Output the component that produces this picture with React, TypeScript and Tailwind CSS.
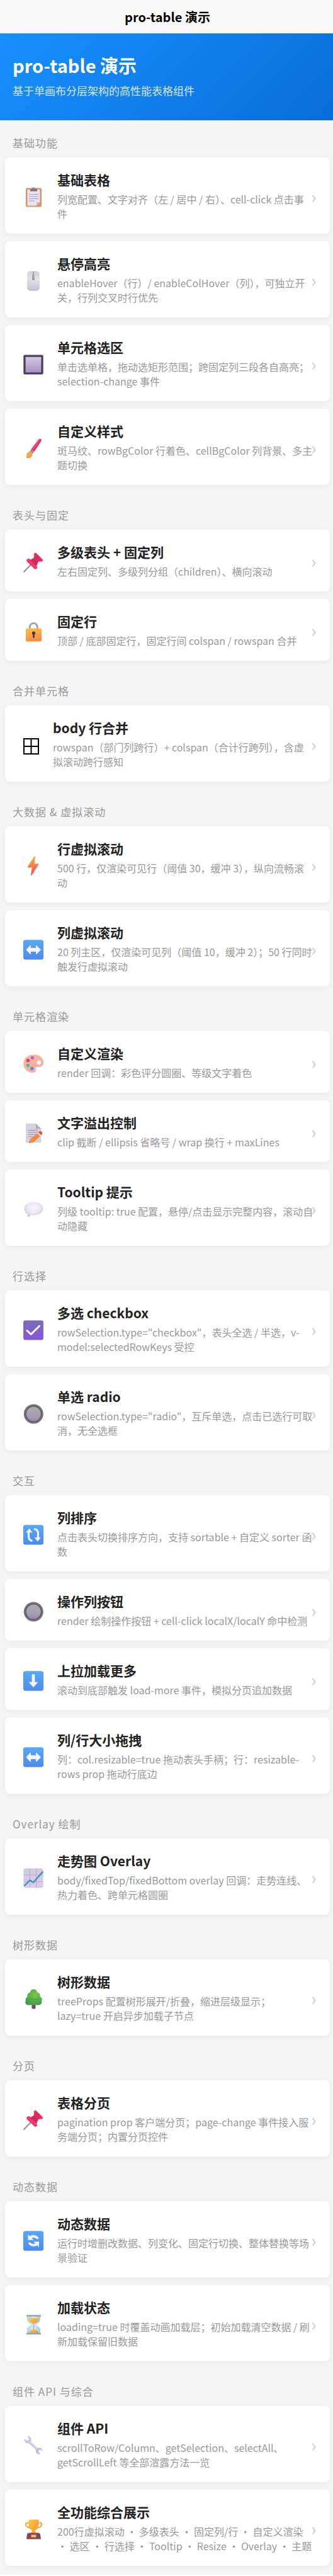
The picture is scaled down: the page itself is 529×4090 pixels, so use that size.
import React from 'react';

type IconName =
  | 'clipboard' | 'mouse' | 'square' | 'brush' | 'pin' | 'lock' | 'grid' | 'bolt'
  | 'leftRight' | 'palette' | 'memo' | 'speech' | 'check' | 'radio' | 'sort'
  | 'down' | 'chart' | 'tree' | 'refresh' | 'hourglass' | 'wrench' | 'trophy';

interface DemoItem {
  icon: IconName;
  title: string;
  desc: string;
}

interface DemoGroup {
  label: string;
  items: DemoItem[];
}

const groups: DemoGroup[] = [
  {
    label: '基础功能',
    items: [
      { icon: 'clipboard', title: '基础表格', desc: '列宽配置、文字对齐（左 / 居中 / 右）、cell-click 点击事件' },
      { icon: 'mouse', title: '悬停高亮', desc: 'enableHover（行）/ enableColHover（列），可独立开关，行列交叉时行优先' },
      { icon: 'square', title: '单元格选区', desc: '单击选单格，拖动选矩形范围；跨固定列三段各自高亮；selection-change 事件' },
      { icon: 'brush', title: '自定义样式', desc: '斑马纹、rowBgColor 行着色、cellBgColor 列背景、多主题切换' },
    ],
  },
  {
    label: '表头与固定',
    items: [
      { icon: 'pin', title: '多级表头 + 固定列', desc: '左右固定列、多级列分组（children）、横向滚动' },
      { icon: 'lock', title: '固定行', desc: '顶部 / 底部固定行，固定行间 colspan / rowspan 合并' },
    ],
  },
  {
    label: '合并单元格',
    items: [
      { icon: 'grid', title: 'body 行合并', desc: 'rowspan（部门列跨行）+ colspan（合计行跨列），含虚拟滚动跨行感知' },
    ],
  },
  {
    label: '大数据 & 虚拟滚动',
    items: [
      { icon: 'bolt', title: '行虚拟滚动', desc: '500 行，仅渲染可见行（阈值 30，缓冲 3），纵向流畅滚动' },
      { icon: 'leftRight', title: '列虚拟滚动', desc: '20 列主区，仅渲染可见列（阈值 10，缓冲 2）；50 行同时触发行虚拟滚动' },
    ],
  },
  {
    label: '单元格渲染',
    items: [
      { icon: 'palette', title: '自定义渲染', desc: 'render 回调：彩色评分圆圈、等级文字着色' },
      { icon: 'memo', title: '文字溢出控制', desc: 'clip 截断 / ellipsis 省略号 / wrap 换行 + maxLines' },
      { icon: 'speech', title: 'Tooltip 提示', desc: '列级 tooltip: true 配置，悬停/点击显示完整内容，滚动自动隐藏' },
    ],
  },
  {
    label: '行选择',
    items: [
      { icon: 'check', title: '多选 checkbox', desc: 'rowSelection.type="checkbox"，表头全选 / 半选，v-model:selectedRowKeys 受控' },
      { icon: 'radio', title: '单选 radio', desc: 'rowSelection.type="radio"，互斥单选，点击已选行可取消，无全选框' },
    ],
  },
  {
    label: '交互',
    items: [
      { icon: 'sort', title: '列排序', desc: '点击表头切换排序方向，支持 sortable + 自定义 sorter 函数' },
      { icon: 'radio', title: '操作列按钮', desc: 'render 绘制操作按钮 + cell-click localX/localY 命中检测' },
      { icon: 'down', title: '上拉加载更多', desc: '滚动到底部触发 load-more 事件，模拟分页追加数据' },
      { icon: 'leftRight', title: '列/行大小拖拽', desc: '列：col.resizable=true 拖动表头手柄；行：resizable-rows prop 拖动行底边' },
    ],
  },
  {
    label: 'Overlay 绘制',
    items: [
      { icon: 'chart', title: '走势图 Overlay', desc: 'body/fixedTop/fixedBottom overlay 回调：走势连线、热力着色、跨单元格圆圈' },
    ],
  },
  {
    label: '树形数据',
    items: [
      { icon: 'tree', title: '树形数据', desc: 'treeProps 配置树形展开/折叠，缩进层级显示；lazy=true 开启异步加载子节点' },
    ],
  },
  {
    label: '分页',
    items: [
      { icon: 'pin', title: '表格分页', desc: 'pagination prop 客户端分页；page-change 事件接入服务端分页；内置分页控件' },
    ],
  },
  {
    label: '动态数据',
    items: [
      { icon: 'refresh', title: '动态数据', desc: '运行时增删改数据、列变化、固定行切换、整体替换等场景验证' },
      { icon: 'hourglass', title: '加载状态', desc: 'loading=true 时覆盖动画加载层；初始加载清空数据 / 刷新加载保留旧数据' },
    ],
  },
  {
    label: '组件 API 与综合',
    items: [
      { icon: 'wrench', title: '组件 API', desc: 'scrollToRow/Column、getSelection、selectAll、getScrollLeft 等全部渲露方法一览' },
      { icon: 'trophy', title: '全功能综合展示', desc: '200行虚拟滚动 · 多级表头 · 固定列/行 · 自定义渲染 · 选区 · 行选择 · Tooltip · Resize · Overlay · 主题' },
    ],
  },
];

// Shared gradients, referenced by every icon below
const IconDefs = () => (
  <svg className="absolute w-0 h-0" aria-hidden="true">
    <defs>
      <linearGradient id="gBlue" x1="0" y1="0" x2="0" y2="1">
        <stop offset="0" stopColor="#55A8F8" />
        <stop offset="1" stopColor="#4C8DEE" />
      </linearGradient>
      <linearGradient id="gPurple" x1="0" y1="0" x2="0" y2="1">
        <stop offset="0" stopColor="#7D6BB4" />
        <stop offset="1" stopColor="#8A55E0" />
      </linearGradient>
      <linearGradient id="gLilac" x1="0" y1="0" x2="0" y2="1">
        <stop offset="0" stopColor="#D3C8E0" />
        <stop offset="1" stopColor="#A892C8" />
      </linearGradient>
      <linearGradient id="gMouse" x1="0" y1="0" x2="0" y2="1">
        <stop offset="0" stopColor="#D2D2D4" />
        <stop offset="0.4" stopColor="#E2E1E4" />
        <stop offset="1" stopColor="#C9C1D6" />
      </linearGradient>
      <linearGradient id="gBolt" x1="0" y1="0" x2="0" y2="1">
        <stop offset="0" stopColor="#FBB546" />
        <stop offset="1" stopColor="#F8434F" />
      </linearGradient>
      <linearGradient id="gLock" x1="0" y1="0" x2="0.3" y2="1">
        <stop offset="0" stopColor="#FBC546" />
        <stop offset="1" stopColor="#F98C45" />
      </linearGradient>
      <linearGradient id="gRadio" x1="0" y1="0" x2="0" y2="1">
        <stop offset="0" stopColor="#ABA9AE" />
        <stop offset="0.6" stopColor="#A7A1AF" />
        <stop offset="1" stopColor="#9A83B8" />
      </linearGradient>
      <linearGradient id="gPin" x1="0" y1="0" x2="1" y2="1">
        <stop offset="0" stopColor="#F0305F" />
        <stop offset="0.5" stopColor="#D32B5C" />
        <stop offset="1" stopColor="#F93A70" />
      </linearGradient>
      <linearGradient id="gChart" x1="0" y1="0" x2="0.3" y2="1">
        <stop offset="0" stopColor="#CFCBD6" />
        <stop offset="1" stopColor="#DACDEA" />
      </linearGradient>
      <radialGradient id="gSpeech" cx="0.5" cy="0.4" r="0.6">
        <stop offset="0" stopColor="#F8F6FA" />
        <stop offset="0.6" stopColor="#EBE6F2" />
        <stop offset="1" stopColor="#CEC4DE" />
      </radialGradient>
      <radialGradient id="gLeaf" cx="0.6" cy="0.35" r="0.7">
        <stop offset="0" stopColor="#7CC846" />
        <stop offset="1" stopColor="#3E9A4A" />
      </radialGradient>
      <linearGradient id="gCup" x1="0" y1="0" x2="1" y2="1">
        <stop offset="0" stopColor="#FFC93F" />
        <stop offset="0.6" stopColor="#F9A233" />
        <stop offset="1" stopColor="#FBC547" />
      </linearGradient>
      <linearGradient id="gGlass" x1="0" y1="0" x2="1" y2="0">
        <stop offset="0" stopColor="#A5D3F2" />
        <stop offset="0.5" stopColor="#D8ECFA" />
        <stop offset="1" stopColor="#9CCBEF" />
      </linearGradient>
      <linearGradient id="gSand" x1="0" y1="0" x2="1" y2="1">
        <stop offset="0" stopColor="#FCCB4A" />
        <stop offset="1" stopColor="#EC9140" />
      </linearGradient>
      <linearGradient id="gSkin" x1="0" y1="0" x2="1" y2="1">
        <stop offset="0" stopColor="#FDB99B" />
        <stop offset="1" stopColor="#F5A79C" />
      </linearGradient>
    </defs>
  </svg>
);

const BlueTile = () => (
  <>
    <rect x="0.2" y="0.5" width="31.6" height="31" rx="3" fill="#3F78CE" />
    <rect x="1" y="0.8" width="30.6" height="30" rx="2.6" fill="url(#gBlue)" />
  </>
);

const shapes: Record<IconName, React.ReactNode> = {
  clipboard: (
    <>
      <rect x="4" y="1.5" width="25" height="30" rx="2" fill="#DC935F" />
      <path d="M6.5 4h20v20l-5.5 5.5H6.5z" fill="#E9E3F1" />
      <path d="M21 29.5V25q0-1 1-1h4.5z" fill="#C7BBD6" />
      <path d="M11 6.8V4.5q0-1.5 1.5-1.5H14a2.5 2.5 0 0 1 5 0h1.5Q22 3 22 4.5v2.3z" fill="#7B7186" />
      <circle cx="16.5" cy="2.8" r="0.9" fill="#DC935F" />
      <path d="M9 11.5h15M9 15h15M9 18.5h15M9 22h9" stroke="#A79CB8" strokeWidth="1" />
    </>
  ),
  mouse: (
    <>
      <rect x="6" y="0.5" width="20" height="31" rx="5" fill="url(#gMouse)" />
      <path d="M7 27q2 4 9 4t9-4" stroke="#BDB3CC" strokeWidth="1" fill="none" />
      <path d="M16 1v7" stroke="#9C9A9E" strokeWidth="1.6" />
      <rect x="14.3" y="6" width="3.4" height="9" rx="1.7" fill="#8E8B91" />
      <rect x="15.6" y="7" width="1.6" height="5" rx="0.8" fill="#B8B6BA" />
    </>
  ),
  square: (
    <>
      <rect x="0.3" y="0.5" width="31.4" height="31" rx="2" fill="#4B3E5E" />
      <rect x="3.6" y="3.8" width="24.8" height="24.4" rx="0.5" fill="url(#gLilac)" />
    </>
  ),
  brush: (
    <>
      <path d="M24.5 1.5q1.5-1.6 3.3-.4 1.7 1.3.5 3.3L17.5 21l-5-3.7z" fill="#E92C68" />
      <path d="M26.3 1.5L15.5 17.5" stroke="#F4588B" strokeWidth="1.4" />
      <path d="M12.5 17.3l5 3.7-2.7 3.7-5-3.7z" fill="#A08F98" />
      <path d="M9.8 21.3q3.9.2 4.8 3.4.6 4.2-3.3 6-3.8 1.5-7.3.3 1.8-1.2 1.2-3.8-.3-4.9 4.6-5.9z" fill="#F9A94C" />
      <path d="M6 29.5q4 .5 6-2" stroke="#E88A42" strokeWidth="1.2" fill="none" />
    </>
  ),
  pin: (
    <>
      <path d="M12.5 19L1.2 30.8" stroke="#8F8B95" strokeWidth="2" strokeLinecap="round" />
      <path d="M17.6 8.3L24 14.6l-3 7.4-10-10z" fill="#CF2B59" />
      <path d="M17.4 1.4q1.6-1.6 3.4.2L30.4 11q1.7 1.8.1 3-1.5 1-3.3.4l-3.2.9-7.5-7.4.9-3.2q-1.2-1.9 0-3.3z" fill="url(#gPin)" />
      <path d="M5.7 11.2q2-2 4.6-.6L21 21.4q1.9 2.6.2 4.6-1.8 1.6-3.7 0L5.9 14.8q-1.6-2-.2-3.6z" fill="#EE2F66" />
      <path d="M7 11.5l13 13" stroke="#F65C87" strokeWidth="1" strokeLinecap="round" />
    </>
  ),
  lock: (
    <>
      <path d="M10.3 13V8.5a6 6 0 0 1 12 0V13" stroke="#A7A1B8" strokeWidth="3" fill="none" />
      <rect x="4" y="10.5" width="25" height="21" rx="2" fill="url(#gLock)" />
      <circle cx="16.5" cy="18.2" r="2.7" fill="#4A3550" />
      <rect x="15.2" y="18" width="2.6" height="8" rx="1.3" fill="#4A3550" />
    </>
  ),
  grid: <path d="M1 6h23v24H1zM12.5 6v24M1 18h23" stroke="#000" strokeWidth="2" fill="none" />,
  bolt: <path d="M17.5.5L7 17q-.6 1.5.8 1.5h6l-1.7 12q.2 1.3 1 .5L24.5 13.5q.4-1.3-1-1.3h-5.7L19 1.2q-.4-1.3-1.5-.7z" fill="url(#gBolt)" />,
  leftRight: (
    <>
      <BlueTile />
      <path d="M4.8 16l6.7-7v4.5h9V9l7 7-7 7v-4.5h-9V23z" fill="#F7F2FF" stroke="#F7F2FF" strokeWidth="1" strokeLinejoin="round" />
    </>
  ),
  palette: (
    <>
      <path d="M17 1.5C27 1.5 32 7.5 32 14c0 5-3.5 7.5-7.5 7-4-.4-5.5 1-4.8 4 .6 3-.7 5-4.2 5C7 30 .2 24 .2 15.5S7.5 1.5 17 1.5z" fill="url(#gSkin)" />
      <circle cx="25" cy="14" r="3.4" fill="#fff" />
      <circle cx="14.5" cy="6.5" r="2.7" fill="#B266D8" />
      <circle cx="7.5" cy="10.8" r="2.7" fill="#E33A7E" />
      <circle cx="7.5" cy="18.5" r="2.7" fill="#45B7B2" />
      <circle cx="13.8" cy="23.5" r="2.7" fill="#4C8FE6" />
    </>
  ),
  memo: (
    <>
      <path d="M4 .8h16l8.5 8.5v22H4z" fill="#D6D1DF" />
      <path d="M20 .8l8.5 8.5H20z" fill="#B3ADBD" />
      <path d="M8 11.5h15M8 15h15M8 18.5h13M8 22h9" stroke="#9D93AE" strokeWidth="1" />
      <path d="M22.3 16.5l4.5 4.5-9.6 9.2-7.2 1.3q-.9-.1-.6-1.2l1.7-4.6z" fill="#F58A3C" />
      <path d="M24 14.7l4.6 4.6-1.8 1.7-4.5-4.5z" fill="#E6D6DE" />
      <path d="M25.5 13.3q1.6-1.5 3.6.4 2.1 2 .9 3.8l-1.5 1.8-4.5-4.6z" fill="#EE4455" />
      <path d="M9.5 30l-.1 1.5 2.6-.3z" fill="#463049" />
    </>
  ),
  speech: (
    <path d="M16.5 4.5c8.5 0 15 4.4 15 10.3S25 25.5 16.5 25.5c-1.5 0-3-.1-4.4-.4-1 1.8-2.9 3-5 3-.8 0-.8-.6-.4-1.1.6-.9.7-2 .2-3C3.5 22.2 1.5 18.8 1.5 14.8 1.5 8.9 8 4.5 16.5 4.5z" fill="url(#gSpeech)" />
  ),
  check: (
    <>
      <rect x="0.2" y="0.5" width="31.6" height="31" rx="3" fill="#6A559F" />
      <rect x="1.2" y="1" width="30.2" height="30" rx="2.5" fill="url(#gPurple)" />
      <path d="M5.8 16.5l6.4 6L25.5 9.5" stroke="#fff" strokeWidth="3" fill="none" strokeLinecap="round" strokeLinejoin="round" />
    </>
  ),
  radio: (
    <>
      <circle cx="16.3" cy="16" r="15.5" fill="#77757A" />
      <circle cx="16.3" cy="16" r="13" fill="#5C5962" />
      <circle cx="16.3" cy="16" r="11.5" fill="url(#gRadio)" />
    </>
  ),
  sort: (
    <>
      <BlueTile />
      <path d="M14.5 25.5c-4-.5-6-3-6-7v-7" stroke="#F7F2FF" strokeWidth="3.2" fill="none" />
      <path d="M4.2 12.3L9.5 5.8l5 6.5z" fill="#F7F2FF" />
      <path d="M17 6.5c4 .5 6.5 3 6.5 7v7" stroke="#F7F2FF" strokeWidth="3.2" fill="none" />
      <path d="M17.7 20l5 6.5 5.2-6.5z" fill="#F7F2FF" />
    </>
  ),
  down: (
    <>
      <BlueTile />
      <path d="M14 6.5q0-1 1-1h2q1 0 1 1V18h5l-7 7.5L9 18h5z" fill="#F7F2FF" stroke="#F7F2FF" strokeWidth="0.8" strokeLinejoin="round" />
    </>
  ),
  chart: (
    <>
      <rect x="0.3" y="0.5" width="31.4" height="31" rx="4" fill="url(#gChart)" />
      <path d="M10.5 1v30M20.5 1v30M1 11h30M1 21.5h30" stroke="#B9B0C6" strokeWidth="1" />
      <path d="M1.3 28.5l8.2-8.5q1-.9 2.2 0l3 2.3q1 .6 2-.3L31.2 5.5" stroke="#3E8FCB" strokeWidth="2.4" fill="none" strokeLinejoin="round" />
    </>
  ),
  tree: (
    <>
      <path d="M13.5 23h6v8q-3 1-6 0z" fill="#7A4A52" />
      <path d="M16.5.5c3.6 0 5.5 2.3 5.3 4.8 3.8.7 5.7 3.7 4.7 7 3.5 1.6 4 4 2.5 6.5 1.5 4-1.3 7-5.5 6.7H9c-5 0-7-3.7-5-7.3-1-2.4.3-4.8 2.7-5.8-1-3.5.8-6.3 4.4-7C11 2.7 13 .5 16.5.5z" fill="url(#gLeaf)" />
      <path d="M8 14q7 4.5 16 1.5" stroke="#48A047" strokeWidth="1.2" fill="none" />
    </>
  ),
  refresh: (
    <>
      <BlueTile />
      <path d="M7.5 5.5v9h9l-3.2-3c3-1.5 6.4-.7 9 2.2l2.5-2.2C21 6.2 14.5 5.8 10.3 8.5z" fill="#F7F2FF" />
      <path d="M25 26v-9h-9l3.2 3c-3 1.5-6.4.7-9-2.2L7.7 20c3.8 5.3 10.3 5.7 14.5 3z" fill="#F7F2FF" />
    </>
  ),
  hourglass: (
    <>
      <path d="M6 3h21v4.5c0 4-3.5 6.5-7.5 8.5 4 2 7.5 4.5 7.5 8.5V29H6v-4.5c0-4 3.5-6.5 7.5-8.5C9.5 14 6 11.5 6 7.5z" fill="url(#gGlass)" />
      <path d="M8.5 5.5h16v2.3c0 3-3.5 5-8 7-4.5-2-8-4-8-7z" fill="url(#gSand)" />
      <path d="M15.9 14h1.2v10h-1.2z" fill="#E29A45" />
      <path d="M8 29.5q1-4.5 8.5-6.5 7.5 2 8.5 6.5z" fill="url(#gSand)" />
      <rect x="5" y="0.5" width="23" height="2.6" rx="0.6" fill="#8CA5B2" />
      <rect x="5" y="29" width="23" height="2.5" rx="0.6" fill="#8CA5B2" />
    </>
  ),
  wrench: (
    <>
      <path d="M8 9l16 14.5" stroke="#CFC5E0" strokeWidth="4.2" />
      <path d="M8.5 8.5l16 14.5" stroke="#DFD8EA" strokeWidth="1.3" />
      <path d="M6.5 1.3q5-.5 6.3 4 .5 3.2-2 5.7-3.5 2.6-7.2.4Q1 9.3 2 5.3l4.2 3 3-2.4z" fill="#CFC8DB" />
      <path d="M20.5 22q3-3.3 6.5-2.5 3.8 1.3 3.6 5.3l-4-2.5-3 2.5 3.4 4.7q-4 1-6.3-2-1.8-2.7-.2-5.5z" fill="#C8BDD9" />
    </>
  ),
  trophy: (
    <>
      <path d="M8.5 5.5H6q-2 0-2 2.5 0 4.5 6.5 5.5M24.5 5.5H27q2 0 2 2.5 0 4.5-6.5 5.5" stroke="#F2A436" strokeWidth="2" fill="none" />
      <path d="M8.5.5h16V9c0 4.5-2.5 7.5-5.8 8.3l.8 3.2h1.5v2h-9v-2h1.5l.8-3.2C11 16.5 8.5 13.5 8.5 9z" fill="url(#gCup)" />
      <path d="M9 21.5h15q2.5 0 3 2.5l1 7.5H5l1-7.5q.5-2.5 3-2.5z" fill="#85455C" />
      <rect x="12.5" y="24.5" width="8" height="4" rx="0.5" fill="#F9BE52" />
    </>
  ),
};

const DemoIcon = ({ name }: { name: IconName }) => {
  if (name === 'grid') {
    // this one is a narrower, plain glyph
    return (
      <svg className="w-[25px] h-8 shrink-0 mt-[5px]" viewBox="0 0 25 32" aria-hidden="true">
        {shapes.grid}
      </svg>
    );
  }
  return (
    <svg className="w-8 h-8 shrink-0 mt-[5px]" viewBox="0 0 32 32" aria-hidden="true">
      {shapes[name]}
    </svg>
  );
};

const DemoCard = ({ item }: { item: DemoItem }) => (
  <a
    href="#"
    className="flex items-center bg-white rounded-lg py-5 pl-[29px] pr-6 shadow-[0_2px_10px_rgba(0,0,0,0.05)]"
  >
    <DemoIcon name={item.icon} />
    <div className="flex-1 min-w-0 ml-[22px] -mr-1">
      <h3 className="text-[21px] leading-[31px] font-semibold text-[#222] mb-1">{item.title}</h3>
      <p className="text-base leading-[23px] text-[#999]">{item.desc}</p>
    </div>
    <span className="w-[6px] shrink-0 text-[28px] leading-8 text-[#ccc]">›</span>
  </a>
);

const App: React.FC = () => {
  return (
    <div className="bg-[#f5f5f5] pb-0.5 font-['Noto_Sans_CJK_SC','Noto_Sans',sans-serif]">
      <IconDefs />
      <header className="bg-[#f8f8f8] h-[53px] pl-[3px] flex items-center justify-center">
        <span className="text-[20px] leading-6 font-bold text-black">pro-table 演示</span>
      </header>

      <div className="bg-[linear-gradient(135deg,#1890ff,#096dd9)] px-5 pt-[30px] pb-[34px] text-white">
        <h1 className="text-[29px] leading-10 font-bold mb-2">pro-table 演示</h1>
        <p className="text-[17px] leading-[26px] text-white/80">基于单画布分层架构的高性能表格组件</p>
      </div>

      <main className="pl-2 pr-[5px]">
        {groups.map((group) => (
          <section key={group.label} className="pb-3">
            <h2 className="text-[17px] leading-6 tracking-[1px] text-[#999] pt-6 pb-[11px] px-3">{group.label}</h2>
            <div className="flex flex-col gap-3">
              {group.items.map((item) => (
                <DemoCard key={item.title} item={item} />
              ))}
            </div>
          </section>
        ))}
      </main>
    </div>
  );
};

export default App;
